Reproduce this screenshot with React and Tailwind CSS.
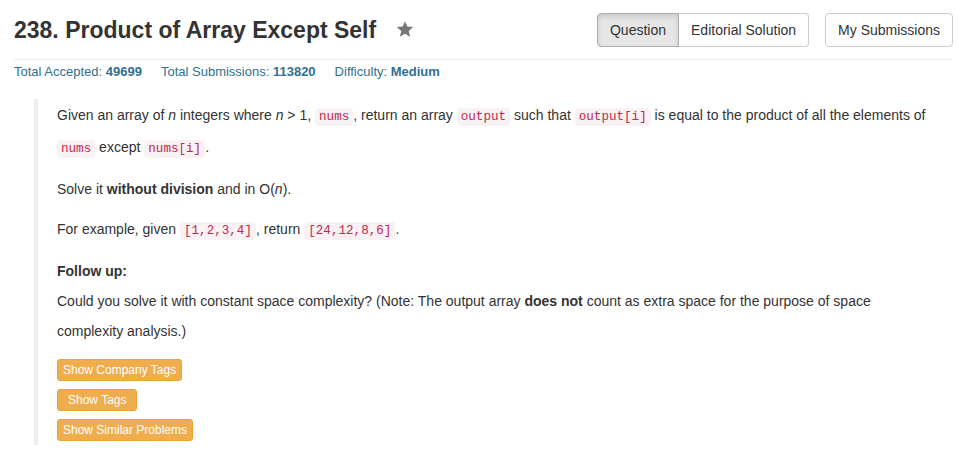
import React from 'react';

const sans = { fontFamily: '"Liberation Sans", Arial, sans-serif' };

function Code({ children }) {
    return (
        <code className="px-[4px] py-[2px] rounded-[4px] bg-[#f9f2f4] text-[#c7254e] text-[12.6px] font-['Liberation_Mono',monospace]">
            {children}
        </code>
    );
}

function Star() {
    return (
        <svg width="18" height="18" viewBox="0 0 24 24" className="ml-[20px] mt-[-2px]">
            <path d="M12 1.5l3.1 7.3 7.9.6-6 5.2 1.9 7.7L12 18.2l-6.9 4.1 1.9-7.7-6-5.2 7.9-.6z" fill="#777" />
        </svg>
    );
}

function TagButton({ children, wide }) {
    return (
        <button
            className={
                'block h-[22px] rounded-[3px] bg-[#f0ad4e] border border-[#eea236] text-white text-[12px] leading-[20px] ' +
                (wide ? 'px-[10px]' : 'px-[5px]')
            }
        >
            {children}
        </button>
    );
}

export default function App() {
    return (
        <div className="bg-white text-[#333] min-h-[458px] pt-[13px] pl-[14px] pr-[15px]" style={sans}>
            <div className="flex items-center justify-between h-[34px]">
                <h3 className="flex items-center text-[23px] font-bold leading-[34px] text-[#333] m-0">
                    238. Product of Array Except Self
                    <Star />
                </h3>
                <div className="flex gap-[16px] text-[14px]">
                    <div className="flex">
                        <button className="h-[34px] px-[12px] bg-[#e6e6e6] border border-[#adadad] rounded-l-[4px] shadow-[inset_0_3px_5px_rgba(0,0,0,0.125)]">
                            Question
                        </button>
                        <button className="h-[34px] px-[12px] bg-white border border-l-0 border-[#ccc] rounded-r-[4px]">
                            Editorial Solution
                        </button>
                    </div>
                    <button className="h-[34px] px-[12px] bg-white border border-[#ccc] rounded-[4px]">My Submissions</button>
                </div>
            </div>

            <div className="mt-[12px] border-t border-[#eee] pt-[3px] text-[13px] leading-[17px] text-[#31708f] flex gap-[19px]">
                <span>
                    Total Accepted: <b>49699</b>
                </span>
                <span>
                    Total Submissions: <b>113820</b>
                </span>
                <span>
                    Difficulty: <b>Medium</b>
                </span>
            </div>

            <blockquote className="mt-[19px] ml-[20px] border-l-[4px] border-[#eee] pl-[19px] pr-[20px] pt-[1px] pb-[4px] text-[14px] leading-[30px]">
                <p className="mb-[10px]">
                    Given an array of <i>n</i> integers where <i>n</i> &gt; 1, <Code>nums</Code>, return an array <Code>output</Code> such that{' '}
                    <Code>output[i]</Code> is equal to the product of all the elements of <Code>nums</Code> except <Code>nums[i]</Code>.
                </p>
                <p className="mb-[10px]">
                    Solve it <b>without division</b> and in O(<i>n</i>).
                </p>
                <p className="mb-[10px]">
                    For example, given <Code>[1,2,3,4]</Code>, return <Code>[24,12,8,6]</Code>.
                </p>
                <p className="mb-[13px]">
                    <b>Follow up:</b>
                    <br />
                    Could you solve it with constant space complexity? (Note: The output array <b>does not</b> count as extra space for the purpose of
                    space complexity analysis.)
                </p>
                <div className="flex flex-col items-start gap-[8px]">
                    <TagButton>Show Company Tags</TagButton>
                    <TagButton wide>Show Tags</TagButton>
                    <TagButton>Show Similar Problems</TagButton>
                </div>
            </blockquote>
        </div>
    );
}
